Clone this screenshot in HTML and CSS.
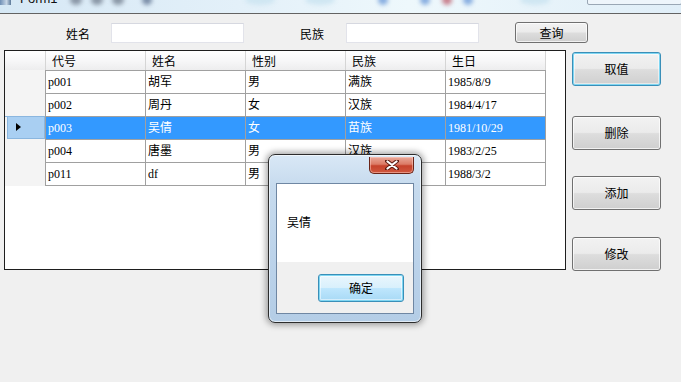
FILE: index.html
```html
<!DOCTYPE html>
<html lang="zh-CN">
<head>
<meta charset="utf-8">
<title>Form1</title>
<link rel="stylesheet" href="styles.css">
</head>
<body>
<div class="titlebar">
  <span class="appicon"></span>
  <span class="title">Form1</span>
  <span class="blob g b1"></span>
  <span class="blob g b2"></span>
  <span class="blob g b3"></span>
  <span class="blob c b4"></span>
  <span class="blob c b5"></span>
  <span class="blob c b6"></span>
  <span class="blob k b7"></span>
  <span class="blob u b8"></span>
  <span class="blob r b9"></span>
  <span class="blob u b10"></span>
  <span class="blob u b11"></span>
  <span class="tbox"></span>
</div>
<div class="form">
  <div class="search">
    <span class="lbl lbl-name">姓名</span>
    <input class="tb tb-name" type="text">
    <span class="lbl lbl-nation">民族</span>
    <input class="tb tb-nation" type="text">
    <button class="btn btn-query">查询</button>
  </div>
  <div class="main">
    <div class="grid">
      <table class="dg">
        <thead>
          <tr>
            <th class="rh"></th>
            <th>代号</th><th>姓名</th><th>性别</th><th>民族</th><th class="last">生日</th>
          </tr>
        </thead>
        <tbody>
          <tr>
            <td class="rh"></td>
            <td>p001</td><td>胡军</td><td>男</td><td>满族</td><td class="last">1985/8/9</td>
          </tr>
          <tr>
            <td class="rh"></td>
            <td>p002</td><td>周丹</td><td>女</td><td>汉族</td><td class="last">1984/4/17</td>
          </tr>
          <tr class="sel">
            <td class="rh"><span class="arrow"></span></td>
            <td>p003</td><td>吴倩</td><td>女</td><td>苗族</td><td class="last">1981/10/29</td>
          </tr>
          <tr>
            <td class="rh"></td>
            <td>p004</td><td>唐墨</td><td>男</td><td>汉族</td><td class="last">1983/2/25</td>
          </tr>
          <tr class="end">
            <td class="rh"></td>
            <td>p011</td><td>df</td><td>男</td><td>壮族</td><td class="last">1988/3/2</td>
          </tr>
        </tbody>
      </table>
    </div>
    <div class="side">
      <button class="btn sbtn focus s1">取值</button>
      <button class="btn sbtn s2">删除</button>
      <button class="btn sbtn s3">添加</button>
      <button class="btn sbtn s4">修改</button>
    </div>
  </div>
</div>

<div class="dialog">
  <div class="close">
    <svg width="14" height="10" viewBox="0 0 14 10">
      <path d="M2 1 L12 9 M12 1 L2 9" stroke="#5a1a10" stroke-width="4" stroke-linecap="round"/>
      <path d="M2.5 1.5 L11.5 8.5 M11.5 1.5 L2.5 8.5" stroke="#ffffff" stroke-width="2.2" stroke-linecap="round"/>
    </svg>
  </div>
  <div class="client">
    <div class="msg">吴倩</div>
    <div class="foot">
      <button class="btn okbtn">确定</button>
    </div>
  </div>
</div>
</body>
</html>
```
FILE: styles.css
```css
html, body {
  margin: 0;
  padding: 0;
  background: #f0f0f0;
  width: 681px;
  height: 382px;
  overflow: hidden;
  font-family: "Noto Sans CJK SC", "Noto Sans", sans-serif;
  font-size: 12px;
  color: #000;
}

.titlebar {
  height: 13px;
  border-bottom: 1px solid #636363;
  background: linear-gradient(90deg, #d6e8f5 0%, #e3f0f9 35%, #eef8fc 60%, #e0eef8 100%);
  display: flex;
  align-items: flex-start;
  overflow: hidden;
  position: relative;
}
.appicon {
  width: 11px;
  height: 5px;
  margin-top: 0;
  background: linear-gradient(90deg, #6f8fb5, #c8d6e6 60%, #5b7898);
}
.title {
  font-family: "Liberation Sans", sans-serif;
  font-size: 13px;
  line-height: 13px;
  margin-top: -8px;
  margin-left: 9px;
  color: #111;
}
.blob {
  position: absolute;
  top: -5px;
  height: 10px;
  border-radius: 50%;
  filter: blur(2px);
}
.blob.g { background: #8a97a6; width: 12px; }
.blob.c { background: #cfe6f2; width: 30px; }
.blob.k { background: #7b8ea8; width: 10px; }
.blob.u { background: #88aee0; width: 10px; }
.blob.r { background: #c8808d; width: 10px; }
.b1 { left: 70px; }
.b2 { left: 91px; }
.b3 { left: 112px; }
.b4 { left: 245px; }
.b5 { left: 305px; }
.b6 { left: 520px; }
.b7 { left: 142px; width: 8px; background: #9fb6d8; }
.b8 { left: 378px; }
.b9 { left: 442px; }
.b10 { left: 420px; }
.b11 { left: 463px; width: 12px; }
.tbox {
  position: absolute;
  left: 587px;
  top: -4px;
  width: 93px;
  height: 7px;
  border: 1px solid #9aa7b5;
  border-radius: 2px;
  background: #eef5fb;
}

.form {
  padding-top: 8px;
}

.search {
  display: flex;
  align-items: flex-start;
  height: 21px;
}
.lbl {
  line-height: 21px;
  margin-top: 1px;
}
.lbl-name { margin-left: 66px; }
.tb {
  box-sizing: border-box;
  width: 133px;
  height: 20px;
  margin-top: 1px;
  border: 1px solid #e2e3ea;
  border-top-color: #d6d8e0;
  background: #fff;
  padding: 0;
  outline: none;
}
.tb-name { margin-left: 21px; }
.lbl-nation { margin-left: 56px; }
.tb-nation { margin-left: 22px; }

.btn {
  box-sizing: border-box;
  border: 1px solid #707070;
  border-radius: 3px;
  background: linear-gradient(#f2f2f2 0%, #ebebeb 48%, #dddddd 52%, #cfcfcf 100%);
  font-family: "Noto Sans CJK SC", sans-serif;
  font-size: 12px;
  color: #000;
  padding: 0;
  box-shadow: inset 0 0 0 1px rgba(255,255,255,0.7);
}
.btn-query {
  margin-left: 36px;
  width: 73px;
  height: 21px;
  line-height: 17px;
}

.main {
  display: flex;
  align-items: flex-start;
  margin-top: 7px;
}

.grid {
  box-sizing: border-box;
  margin-left: 4px;
  width: 562px;
  height: 220px;
  border: 1px solid #1e1e1e;
  background: #fff;
}

.dg {
  border-collapse: separate;
  border-spacing: 0;
  table-layout: fixed;
  font-family: "Liberation Serif", "Noto Sans CJK SC", serif;
  font-size: 12px;
}
.dg th, .dg td {
  padding: 0;
  text-align: left;
  font-weight: normal;
  white-space: nowrap;
  overflow: hidden;
}
.dg th {
  box-sizing: border-box;
  height: 19px;
  width: 100px;
  padding-left: 6px;
  border-left: 1px solid #d5d5d5;
  background: linear-gradient(#ffffff 0%, #f7f7f8 50%, #ededee 100%);
  font-family: "Noto Sans CJK SC", sans-serif;
  line-height: 17px;
  vertical-align: middle;
}
.dg th.rh {
  width: 40px;
  border-left: none;
  padding: 0;
}
.dg th.last {
  border-right: 1px solid #d5d5d5;
  width: 101px;
}
.dg td {
  box-sizing: border-box;
  height: 23px;
  width: 100px;
  padding-left: 2px;
  border-left: 1px solid #a0a0a0;
  border-top: 1px solid #a0a0a0;
  background: #fff;
  vertical-align: middle;
  line-height: 22px;
}
.dg td.rh {
  width: 40px;
  padding: 0;
  border-left: none;
  border-top: 1px solid #f4f4f4;
  background: #f4f4f4;
  position: relative;
}
.dg td.last {
  width: 101px;
  border-right: 1px solid #a0a0a0;
}
.dg tr.end td {
  height: 24px;
  border-bottom: 1px solid #a0a0a0;
}
.dg tr.end td.rh {
  border-bottom-color: #f4f4f4;
}
.dg tr.sel td {
  background: #3399ff;
  color: #fff;
}
.dg tr.sel td.rh {
  background: #a9cff2;
  border-top: 1px solid #8ab6df;
  box-shadow: inset 2px 0 0 #f4f4f4, inset 0 -1px 0 #8ab6df, inset -1px 0 0 #8ab6df, inset 3px 0 0 #8ab6df;
}
.arrow {
  position: absolute;
  left: 11px;
  top: 6px;
  width: 0;
  height: 0;
  border-top: 4px solid transparent;
  border-bottom: 4px solid transparent;
  border-left: 5px solid #000;
}

.side {
  display: flex;
  flex-direction: column;
  margin-left: 6px;
}
.sbtn {
  width: 89px;
  height: 34px;
  line-height: 30px;
}
.s1 { margin-top: 2px; }
.s2 { margin-top: 30px; }
.s3 { margin-top: 26px; }
.s4 { margin-top: 27px; }
.focus {
  border-color: #3a8fb8;
  box-shadow: inset 0 0 0 1px #7fd6f2, inset 0 0 0 2px rgba(255,255,255,0.5);
}

.dialog {
  position: absolute;
  left: 268px;
  top: 154px;
  width: 154px;
  height: 169px;
  box-sizing: border-box;
  border: 1px solid #2c2c2c;
  border-radius: 7px;
  background: linear-gradient(180deg, #d9e8f6 0%, #c7dbee 18%, #bcd3ea 60%, #b4cde6 100%);
  box-shadow: 0 0 6px 2px rgba(0,0,0,0.35), inset 0 0 0 1px rgba(255,255,255,0.6);
  padding: 28px 7px 7px 7px;
}
.close {
  position: absolute;
  left: 100px;
  top: 2px;
  width: 45px;
  height: 17px;
  box-sizing: border-box;
  border: 1px solid #6a2418;
  border-top: none;
  border-radius: 0 0 5px 5px;
  background: linear-gradient(#e9a899 0%, #dc7b66 45%, #c6422c 55%, #d0583f 100%);
  display: flex;
  align-items: center;
  justify-content: center;
  box-shadow: inset 0 0 0 1px rgba(255,210,200,0.5);
}
.client {
  box-sizing: border-box;
  height: 131px;
  border: 1px solid #6f87a3;
  background: #fff;
  display: flex;
  flex-direction: column;
}
.msg {
  height: 78px;
  padding-left: 10px;
  padding-top: 30px;
  box-sizing: border-box;
  line-height: 16px;
}
.foot {
  flex: 1;
  background: #f0f0f0;
  display: flex;
  justify-content: flex-end;
  align-items: flex-start;
  padding-top: 12px;
  padding-right: 9px;
}
.okbtn {
  width: 86px;
  height: 28px;
  line-height: 24px;
  border-color: #3a8fb8;
  box-shadow: inset 0 0 0 1px #7fd6f2, inset 0 0 0 2px rgba(255,255,255,0.5);
  background: linear-gradient(#eaf6fd 0%, #d9f0fc 48%, #bee6fd 52%, #a7d9f5 100%);
}
```
